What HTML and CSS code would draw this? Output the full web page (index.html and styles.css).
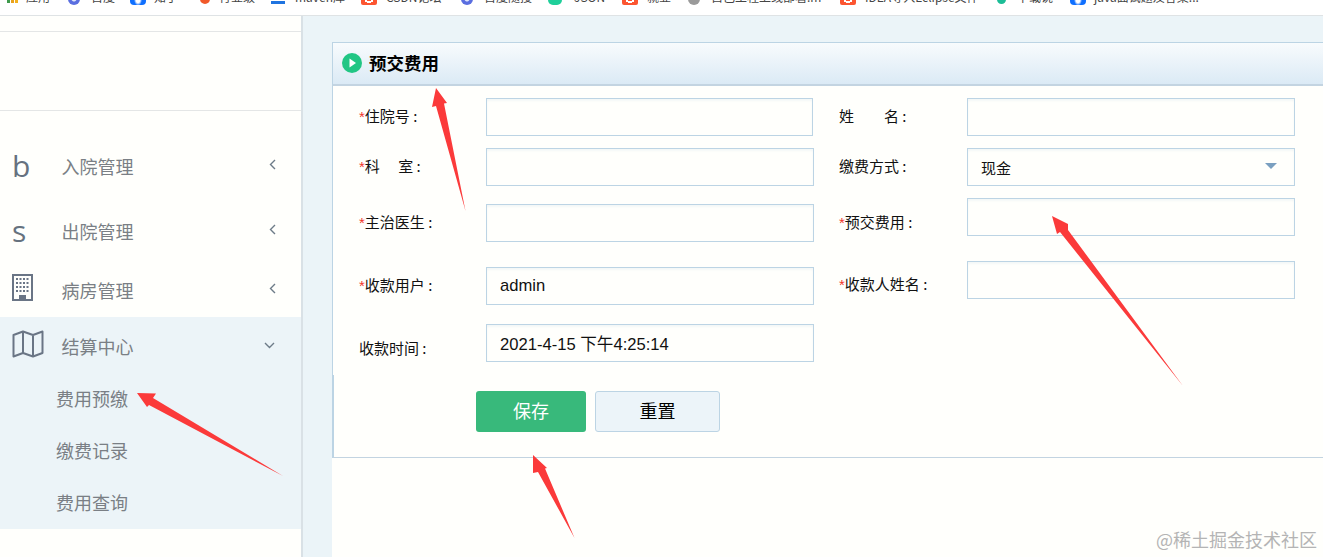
FILE: index.html
```html
<!DOCTYPE html>
<html lang="zh-CN">
<head>
<meta charset="utf-8">
<title>预交费用</title>
<link rel="stylesheet" href="styles.css">
</head>
<body>
<div class="bookmarks">
  <div class="bm"><span class="ic ic-apps"><i></i><i></i><i></i></span><span class="bm-t bm-t-apps">应用</span></div>
  <div class="bm"><span class="ic ic-paw"></span><span>百度</span></div>
  <div class="bm"><span class="ic ic-blue"></span><span>知乎</span></div>
  <div class="bm"><span class="ic ic-flame"></span><span>行业级</span></div>
  <div class="bm"><span class="ic ic-maven"></span><span>maven库</span></div>
  <div class="bm"><span class="ic ic-csdn"></span><span>CSDN论坛</span></div>
  <div class="bm"><span class="ic ic-paw"></span><span>百度随搜</span></div>
  <div class="bm"><span class="ic ic-json"></span><span>JSON</span></div>
  <div class="bm"><span class="ic ic-csdn"></span><span>就业</span></div>
  <div class="bm"><span class="ic ic-gear"></span><span>自己工程上线部署.m</span></div>
  <div class="bm"><span class="ic ic-csdn"></span><span>IDEA导入Eclipse文件</span></div>
  <div class="bm"><span class="ic ic-pin"></span><span>下载说</span></div>
  <div class="bm"><span class="ic ic-blue"></span><span>java面试题及答案...</span></div>
</div>

<div class="app">
  <aside class="sidebar">
    <div class="side-top"></div>
    <div class="side-brand"></div>
    <nav class="menu">
      <a class="item item-a"><span class="slot glyph">b</span><span>入院管理</span>
        <svg class="chev" width="7" height="11" viewBox="0 0 7 11"><path d="M6 1 1.5 5.5 6 10" fill="none" stroke="#6d7b88" stroke-width="1.4"/></svg></a>
      <a class="item item-b"><span class="slot glyph glyph-s">s</span><span>出院管理</span>
        <svg class="chev" width="7" height="11" viewBox="0 0 7 11"><path d="M6 1 1.5 5.5 6 10" fill="none" stroke="#6d7b88" stroke-width="1.4"/></svg></a>
      <a class="item item-c"><span class="slot"><svg class="ico-building" width="21" height="27" viewBox="0 0 21 27"><path fill="#6a7585" fill-rule="evenodd" d="M0 0h21v27H0zM2 2v23h5v-4h7v4h5V2z"/><g fill="#6a7585"><rect x="4" y="4" width="2" height="2"/><rect x="7.500" y="4" width="2" height="2"/><rect x="11" y="4" width="2" height="2"/><rect x="14.500" y="4" width="2" height="2"/><rect x="4" y="8" width="2" height="2"/><rect x="7.500" y="8" width="2" height="2"/><rect x="11" y="8" width="2" height="2"/><rect x="14.500" y="8" width="2" height="2"/><rect x="4" y="12" width="2" height="2"/><rect x="7.500" y="12" width="2" height="2"/><rect x="11" y="12" width="2" height="2"/><rect x="14.500" y="12" width="2" height="2"/><rect x="4" y="16" width="2" height="2"/><rect x="7.500" y="16" width="2" height="2"/><rect x="11" y="16" width="2" height="2"/><rect x="14.500" y="16" width="2" height="2"/></g></svg></span><span>病房管理</span>
        <svg class="chev" width="7" height="11" viewBox="0 0 7 11"><path d="M6 1 1.500 5.500 6 10" fill="none" stroke="#6d7b88" stroke-width="1.4"/></svg></a>
      <div class="group">
        <a class="item item-open"><span class="slot"><svg class="ico-map" width="32" height="28" viewBox="0 0 32 28"><path fill="none" stroke="#6a7585" stroke-width="2" stroke-linejoin="round" d="M1.500 5 11 1.500l10 3.500 9.500-3.500V23L21 26.500 11 23l-9.500 3.500zM11 1.500V23M21 5v21.500"/></svg></span><span>结算中心</span>
          <svg class="chev-down" width="11" height="7" viewBox="0 0 11 7"><path d="M1 1l4.500 4.500L10 1" fill="none" stroke="#6d7b88" stroke-width="1.4"/></svg></a>
        <a class="sub">费用预缴</a>
        <a class="sub">缴费记录</a>
        <a class="sub">费用查询</a>
      </div>
      <a class="item item-d"><span class="slot"></span><span>基础数据</span></a>
    </nav>
  </aside>

  <main class="main">
    <div class="sheet">
      <section class="panel">
        <header class="panel-head">
          <svg width="20" height="20" viewBox="0 0 20 20"><circle cx="10" cy="10" r="10" fill="#21c684"/><path d="M7.500 5.500 14 10l-6.500 4.500z" fill="#fff"/></svg>
          <h1>预交费用</h1>
        </header>
        <form class="fields">
          <div class="col">
            <div class="field"><label><b>*</b>住院号 :</label><input class="ctl ctl-first" type="text"></div>
            <div class="field gap-12"><label><b>*</b>科&emsp;&nbsp;室 :</label><input class="ctl" type="text"></div>
            <div class="field gap-18"><label><b>*</b>主治医生 :</label><input class="ctl" type="text"></div>
            <div class="field gap-25"><label><b>*</b>收款用户 :</label><input class="ctl" type="text" value="admin"></div>
            <div class="field gap-19"><label class="low">收款时间 :</label><input class="ctl" type="text" value="2021-4-15 下午4:25:14"></div>
          </div>
          <div class="col col-r">
            <div class="field"><label>姓&emsp;&emsp;名 :</label><input class="ctl" type="text"></div>
            <div class="field gap-12"><label>缴费方式 :</label><div class="ctl picker"><span>现金</span></div></div>
            <div class="field gap-12"><label class="low"><b>*</b>预交费用 :</label><input class="ctl" type="text"></div>
            <div class="field gap-25"><label class="low low-s"><b>*</b>收款人姓名 :</label><input class="ctl" type="text"></div>
          </div>
        </form>
        <div class="foot">
          <button class="btn btn-save" type="button">保存</button>
          <button class="btn btn-reset" type="button">重置</button>
        </div>
      </section>
    </div>
  </main>
</div>

<svg class="arrows" width="1323" height="557" viewBox="0 0 1323 557">
  <g fill="#fb3a3a">
    <polygon points="436,88 447,103 444,103.500 465.500,211 436,106 432,107"/>
    <polygon points="137,393 156,393.500 153,398 283,476 149,405 147,407"/>
    <polygon points="1052,216 1068,224 1068,230 1183,386 1060,232 1057,234"/>
    <polygon points="533,455 547,468 545,468.500 574.500,538 538,472 533,473"/>
  </g>
</svg>
<div class="watermark">@稀土掘金技术社区</div>
</body>
</html>
```

FILE: styles.css
```css
* { box-sizing: border-box; }
html, body { height: 100%; }
body {
  margin: 0;
  height: 557px;
  overflow: hidden;
  position: relative;
  display: flex;
  flex-direction: column;
  background: #fffffc;
  font-family: "Noto Sans CJK SC", "Liberation Sans", sans-serif;
  color: #222;
}

/* browser bookmarks strip, cut off at the top of the capture */
.bookmarks {
  flex: none;
  height: 16px;
  overflow: hidden;
  border-bottom: 1px solid #dfe3e5;
  background: #fff;
  display: grid;
  grid-template-columns: 61px 62px 70px 71px 90px 100px 87px 74px 66px 152px 157px 73px 1fr;
  padding-left: 7px;
  font-size: 12px;
  line-height: 16px;
  color: #444;
}
.bm { display: flex; align-items: flex-start; margin-top: -11px; white-space: nowrap; }
.ic { flex: none; display: block; width: 16px; height: 16px; margin-right: 8px; }
.ic-apps { display: flex; gap: 1px; align-items: flex-end; width: 11px; margin-right: 8px; height: 14px; }
.ic-apps i { display: block; width: 3px; height: 100%; background: #e8a21d; }
.ic-apps i:first-child { background: #3f9a4d; }
.ic-apps i:last-child { background: #f2b01e; }
.ic-paw { width: 12px; margin-right: 11px; background: radial-gradient(circle at 6px 10px, #dfe6fb 0, #dfe6fb 2px, #5a6ee0 3px); border-radius: 6px; }
.ic-blue { background: radial-gradient(ellipse at 8px 11px, #fff 0, #fff 2px, #0f6fff 4px); border-radius: 4px; }
.ic-flame { width: 10px; margin-right: 9px; background: #f1592a; border-radius: 0 0 5px 5px; height: 15px; }
.ic-maven { width: 14px; margin-right: 10px; height: 16px; background: linear-gradient(transparent 0, transparent 12px, #1f74e0 12px, #1f74e0 15px, transparent 15px); }
.ic-csdn { background: radial-gradient(circle at 8px 9px, transparent 0, transparent 3px, #fff 3px, #fff 5px, transparent 5px), #fc5531; border-radius: 2px; margin-right: 9px; }
.ic-json { width: 14px; margin-right: 12px; background: #1fcf9a; border-radius: 5px; }
.ic-gear { width: 12px; margin-right: 11px; background: #9a9a9a; border-radius: 6px; }
.ic-pin { width: 9px; margin-right: 11px; background: #1cbd97; border-radius: 0 0 5px 5px; height: 15px; }

/* page */
.app { flex: 1; display: flex; min-height: 0; }

.sidebar {
  flex: none;
  width: 303px;
  border-right: 2px solid #d9e1e6;
  background: #fffffc;
  overflow: hidden;
}
.side-top { height: 16px; border-bottom: 1px solid #e4e6e6; }
.side-brand { height: 79px; border-bottom: 1px solid #e4e6e6; }

.menu { padding-top: 30px; font-size: 18px; color: #7a7f85; }
.item {
  display: flex;
  align-items: center;
  height: 52px;
  padding: 0 0 2px 12px;
}
.item-b { margin-top: 13px; }
.item-c { margin-top: 7px; }
.item-open { height: 56px; padding-top: 4px; }
.item-d { margin-top: 11px; }
.slot { flex: none; width: 49.5px; display: flex; align-items: center; }
.glyph {
  font-family: "Open Sans", sans-serif;
  font-size: 30px;
  line-height: 30px;
  color: #66727f;
}
.ico-building { margin-bottom: 5px; }
.ico-map { margin-bottom: 5px; }
.chev { margin-left: auto; margin-right: 25px; margin-bottom: 4px; }
.chev-down { margin-left: auto; margin-right: 26px; margin-bottom: 2px; }
.group { background: #ecf4f8; }
.sub { display: block; height: 52px; line-height: 50px; padding-left: 56px; }

.main {
  flex: 1;
  min-width: 0;
  display: flex;
  padding: 26px 0 0 29px;
  background: #ebf4f8;
}
.sheet { flex: 1; min-width: 0; background: #fffffc; }

.panel-head {
  height: 44px;
  display: flex;
  align-items: center;
  gap: 7px;
  padding: 0 0 1px 9px;
  border: 1px solid #bcd4e4;
  border-right: 0;
  border-bottom: 2px solid #c3d4e1;
  background: linear-gradient(#f8fbfd, #dbeaf5);
}
.panel-head svg { flex: none; }
.panel-head h1 { margin: 0; font-size: 17.5px; line-height: 24px; font-weight: 700; color: #000; }

.fields {
  height: 289px;
  display: flex;
  padding: 12px 0 0 26px;
  border-left: 1px solid #bcd4e4;
}
.col { flex: none; width: 455px; }
.col-r { margin-left: 25px; width: 456px; }
.field { display: flex; align-items: center; height: 38px; }
.gap-12 { margin-top: 12px; }
.gap-18 { margin-top: 18px; }
.gap-19 { margin-top: 19px; }
.gap-25 { margin-top: 25px; }
.field label { flex: none; width: 127px; padding-bottom: 2px; font-size: 15px; line-height: 20px; color: #111; white-space: nowrap; }
.col-r .field label { width: 128px; }
.field label.low { padding: 10px 0 0; }
.field label.low-s { padding-top: 8px; }
.field label b { font-family: "Liberation Sans", sans-serif; font-weight: 400; color: #f2352b; }

.ctl {
  display: block;
  width: 328px;
  height: 38px;
  margin: 0;
  padding: 0 13px;
  border: 1px solid #bcd4e4;
  border-radius: 0;
  outline: 0;
  background: #fffffc;
  box-shadow: inset 0 2px 2px rgba(188, 212, 228, .18);
  font-family: "Liberation Sans", "Noto Sans CJK SC", sans-serif;
  font-size: 16.6px;
  color: #111;
}
.ctl-first { width: 327px; }
.picker {
  display: flex;
  align-items: center;
  justify-content: space-between;
  padding-right: 17px;
  font-family: "Noto Sans CJK SC", sans-serif;
  font-size: 15px;
}
.picker::after {
  content: "";
  width: 0;
  height: 0;
  margin-top: -2px;
  border-left: 6px solid transparent;
  border-right: 6px solid transparent;
  border-top: 6px solid #7a9fc0;
}

.foot {
  height: 83px;
  display: flex;
  align-items: flex-start;
  gap: 9px;
  padding: 16px 0 0 142px;
  border-left: 2px solid #bcd4e4;
  border-bottom: 1px solid #c3d4e1;
}
.btn {
  height: 41px;
  margin: 0;
  padding: 0 0 3px;
  border-radius: 3px;
  font-family: "Noto Sans CJK SC", sans-serif;
  font-size: 18px;
}
.btn-save { width: 110px; border: 0; background: #38b97b; color: #fff; }
.btn-reset { width: 125px; border: 1px solid #bcd4e4; background: #ecf4f9; color: #000; }

/* annotations drawn over the screenshot */
.arrows { position: absolute; left: 0; top: 0; pointer-events: none; }
.watermark {
  position: absolute;
  right: 6px;
  bottom: 5px;
  font-size: 18px;
  line-height: 26px;
  color: #b4b4b4;
  white-space: nowrap;
}
```
